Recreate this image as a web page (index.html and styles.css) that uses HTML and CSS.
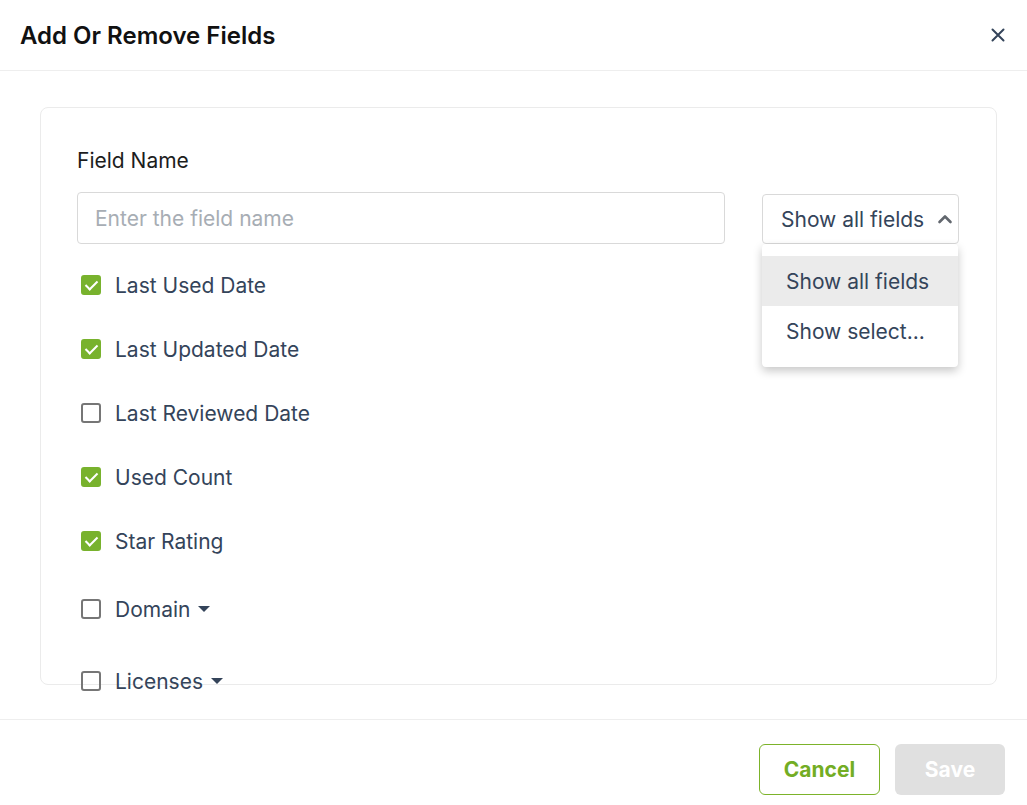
FILE: index.html
```html
<!DOCTYPE html>
<html lang="en">
  <head>
    <meta charset="UTF-8" />
    <meta name="viewport" content="width=device-width, initial-scale=1.0" />
    <title>Add Or Remove Fields</title>
    <link rel="stylesheet" href="styles.css">
  </head>
  <body>
    <div class="modal">
      <div class="modal-header">
        <h1 class="modal-title">Add Or Remove Fields</h1>
        <button class="close-btn" aria-label="Close">
          <svg width="14" height="14" viewBox="0 0 14 14">
            <path d="M1.5 1.5 L12.5 12.5 M12.5 1.5 L1.5 12.5" stroke="#34445a" stroke-width="2" stroke-linecap="round" />
          </svg>
        </button>
      </div>

      <div class="modal-body">
        <div class="card">
          <label class="field-label" for="field-name">Field Name</label>
          <div class="search-row">
            <input type="text" id="field-name" class="field-input" placeholder="Enter the field name" />
            <div class="select">
              <div class="select-box">
                <span>Show all fields</span>
                <svg width="16" height="12" viewBox="0 0 16 12">
                  <path d="M2.5 9 L8 3.5 L13.5 9" fill="none" stroke="#62676e" stroke-width="2.6" stroke-linecap="round" stroke-linejoin="round" />
                </svg>
              </div>
              <ul class="select-menu">
                <li class="option selected">Show all fields</li>
                <li class="option">Show select...</li>
              </ul>
            </div>
          </div>

          <ul class="field-list">
            <li class="field-row"><span class="check checked"></span>Last Used Date</li>
            <li class="field-row"><span class="check checked"></span>Last Updated Date</li>
            <li class="field-row"><span class="check"></span>Last Reviewed Date</li>
            <li class="field-row"><span class="check checked"></span>Used Count</li>
            <li class="field-row"><span class="check checked"></span>Star Rating</li>
            <li class="field-row group"><span class="check"></span>Domain<span class="caret"></span></li>
            <li class="field-row group"><span class="check"></span>Licenses<span class="caret"></span></li>
          </ul>
        </div>
      </div>

      <div class="modal-footer">
        <button class="btn btn-cancel">Cancel</button>
        <button class="btn btn-save" disabled>Save</button>
      </div>
    </div>
  </body>
</html>
```

FILE: styles.css
```css
body {
  margin: 0;
  padding: 0;
  font-family: Inter, "Noto Sans", sans-serif;
  background: #fff;
}

.modal {
  width: 1027px;
  height: 805px;
  display: flex;
  flex-direction: column;
  overflow: hidden;
}

.modal-header {
  height: 70px;
  flex-shrink: 0;
  border-bottom: 1px solid #eeeeee;
  display: flex;
  align-items: center;
  justify-content: space-between;
  padding: 0 18px 0 20px;
}
.modal-title {
  margin: 0;
  font-size: 24px;
  font-weight: 600;
  color: #111;
}
.close-btn {
  background: transparent;
  border: none;
  padding: 4px;
  cursor: pointer;
  display: flex;
}

.modal-body {
  flex: 1;
  padding: 36px 30px 34px 40px;
}
.card {
  height: 578px;
  box-sizing: border-box;
  border: 1px solid #ebebeb;
  border-radius: 8px;
  padding: 40px 37px 0 36px;
}
.field-label {
  display: block;
  font-size: 21px;
  color: #1d1d1d;
  margin-bottom: 19px;
}

.search-row {
  display: flex;
  align-items: flex-end;
  justify-content: space-between;
}
.field-input {
  width: 648px;
  height: 52px;
  box-sizing: border-box;
  border: 1px solid #d9d9d9;
  border-radius: 4px;
  padding: 0 17px;
  font-family: inherit;
  font-size: 21px;
  color: #344054;
  outline: none;
}
.field-input::placeholder {
  color: #a7adb4;
}

.select {
  position: relative;
  width: 197px;
}
.select-box {
  height: 50px;
  box-sizing: border-box;
  border: 1px solid #d9d9d9;
  border-radius: 4px;
  display: flex;
  align-items: center;
  justify-content: space-between;
  padding: 0 5px 0 18px;
  font-size: 21px;
  color: #34445a;
}
.select-menu {
  position: absolute;
  top: 50px;
  left: 0;
  width: 196px;
  margin: 0;
  padding: 12px 0 11px;
  list-style: none;
  background: #fff;
  border-radius: 4px;
  box-shadow: 0 4px 10px rgba(0, 0, 0, 0.22);
  z-index: 2;
}
.option {
  height: 50px;
  display: flex;
  align-items: center;
  padding-left: 24px;
  font-size: 21px;
  color: #34445a;
}
.option.selected {
  background: #ebebeb;
}

.field-list {
  list-style: none;
  margin: 9px 0 0;
  padding: 0;
}
.field-row {
  height: 64px;
  display: flex;
  align-items: center;
  font-size: 21px;
  color: #34445a;
  padding-left: 4px;
}
.field-row.group {
  height: 72px;
}
.check {
  width: 20px;
  height: 20px;
  box-sizing: border-box;
  border: 2px solid #767676;
  border-radius: 3px;
  margin-right: 14px;
  position: relative;
  flex-shrink: 0;
}
.check.checked {
  background: #78b22d;
  border-color: #78b22d;
}
.check.checked::after {
  content: "";
  position: absolute;
  left: 5px;
  top: 1px;
  width: 5px;
  height: 10px;
  border: solid #fff;
  border-width: 0 2.5px 2.5px 0;
  transform: rotate(45deg);
}
.caret {
  width: 0;
  height: 0;
  border-left: 6px solid transparent;
  border-right: 6px solid transparent;
  border-top: 6px solid #34445a;
  margin-left: 8px;
}

.modal-footer {
  flex-shrink: 0;
  height: 86px;
  box-sizing: border-box;
  border-top: 1px solid #eeeeee;
  display: flex;
  justify-content: flex-end;
  align-items: flex-start;
  gap: 15px;
  padding: 24px 22px 0 0;
}
.btn {
  height: 51px;
  border-radius: 6px;
  font-family: inherit;
  font-size: 21px;
  font-weight: 700;
  cursor: pointer;
}
.btn-cancel {
  width: 121px;
  background: #fff;
  border: 1px solid #7cb32a;
  color: #73ad24;
}
.btn-save {
  width: 110px;
  background: #e0e0e0;
  border: none;
  color: #fff;
}
```
